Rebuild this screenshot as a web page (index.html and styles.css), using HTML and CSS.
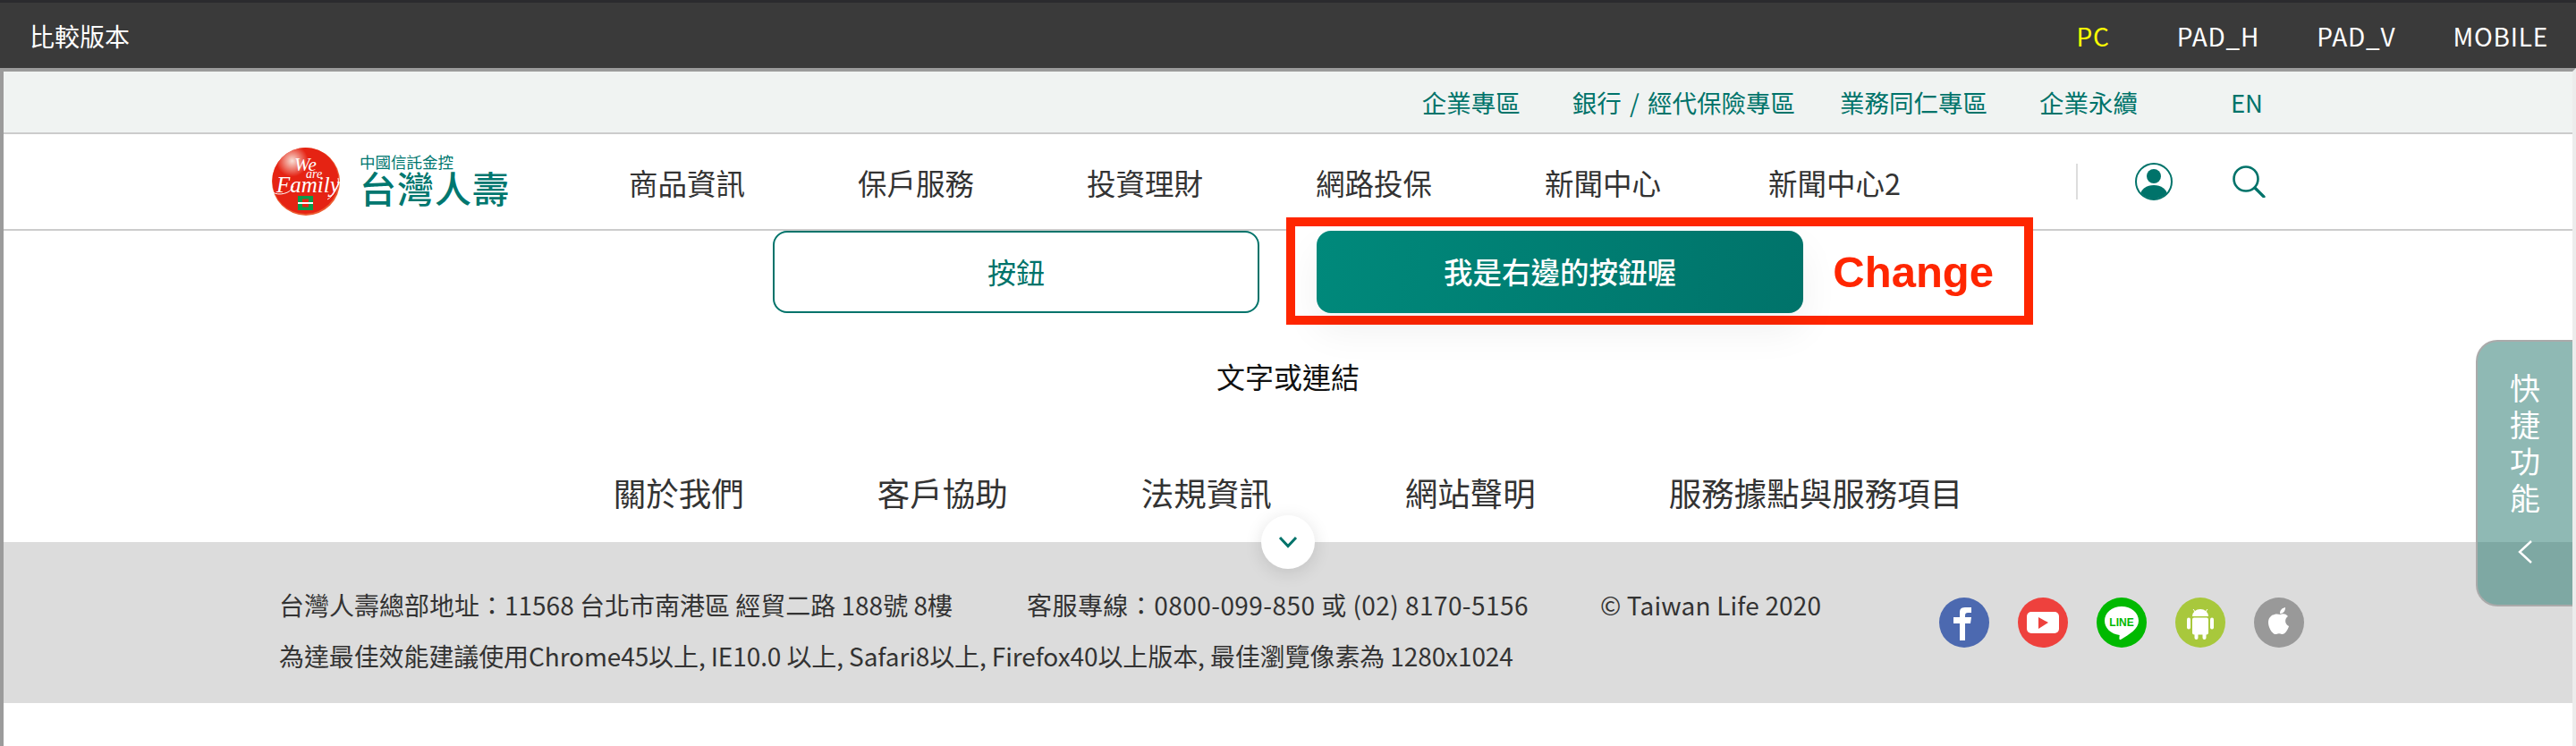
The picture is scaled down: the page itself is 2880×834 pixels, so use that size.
FILE: index.html
```html
<!DOCTYPE html>
<html lang="zh-Hant">
<head>
    <meta charset="UTF-8">
    <title>比較版本</title>
    <link rel="stylesheet" href="styles.css">
</head>
<body>
    <div class="compare-bar">
        <span class="compare-title">比較版本</span>
        <div class="compare-modes">
            <a class="active">PC</a>
            <a>PAD_H</a>
            <a>PAD_V</a>
            <a>MOBILE</a>
        </div>
    </div>
    <div class="frame">
        <div class="util-bar">
            <a>企業專區</a>
            <a class="gap-s">銀行 / 經代保險專區</a>
            <a>業務同仁專區</a>
            <a>企業永續</a>
            <a class="gap-l">EN</a>
        </div>
        <header class="site-header">
            <a class="logo">
                <svg class="logo-mark" viewBox="0 0 76 76">
                    <defs>
                        <radialGradient id="shine" cx="0.3" cy="0.2" r="0.24">
                            <stop offset="0" stop-color="#f8e0d6"/>
                            <stop offset="1" stop-color="#e52313"/>
                        </radialGradient>
                    </defs>
                    <circle cx="38" cy="38" r="38" fill="#ec5a30"/>
                    <circle cx="37.500" cy="37" r="37" fill="url(#shine)"/>
                    <text class="logo-script"><tspan x="25" y="26" font-size="21">We</tspan><tspan x="38" y="34" font-size="14">are</tspan><tspan x="5" y="50" font-size="25">Family</tspan></text>
                    <path d="M1 50c6 4 20 2 23-7M74 34c2 8-5 20-12 24" fill="none" stroke="#fff" stroke-width="1"/>
                    <rect x="29" y="54" width="17" height="16" fill="#0a9a4a"/>
                    <rect x="34" y="57.500" width="7" height="9" fill="#e52313"/>
                    <rect x="29" y="61" width="17" height="2" fill="#fff"/>
                </svg>
                <span class="logo-text">
                    <span class="logo-small">中國信託金控</span>
                    <span class="logo-big">台灣人壽</span>
                </span>
            </a>
            <nav class="main-nav">
                <a>商品資訊</a>
                <a>保戶服務</a>
                <a>投資理財</a>
                <a>網路投保</a>
                <a>新聞中心</a>
                <a class="nav-last">新聞中心2</a>
            </nav>
            <div class="header-icons">
                <svg class="icon-user" viewBox="0 0 42 42">
                    <defs>
                        <clipPath id="userClip"><circle cx="21" cy="21" r="19.500"/></clipPath>
                    </defs>
                    <circle cx="21" cy="21" r="20" fill="none" stroke="#00736a" stroke-width="2"/>
                    <circle cx="21" cy="15" r="8" fill="#00736a"/>
                    <ellipse cx="21" cy="36" rx="15" ry="11" fill="#00736a" clip-path="url(#userClip)"/>
                </svg>
                <svg class="icon-search" viewBox="0 0 37 36">
                    <circle cx="15" cy="15" r="13.500" fill="none" stroke="#00736a" stroke-width="2.600"/>
                    <path d="M25 25l10 10" fill="none" stroke="#00736a" stroke-width="3.200" stroke-linecap="round"/>
                </svg>
            </div>
        </header>
        <main class="content">
            <div class="btn-row">
                <a class="btn btn-outline">按鈕</a>
                <a class="btn btn-solid">我是右邊的按鈕喔</a>
                <div class="change-box">Change</div>
            </div>
            <a class="text-link">文字或連結</a>
            <nav class="footer-nav">
                <a>關於我們</a>
                <a>客戶協助</a>
                <a>法規資訊</a>
                <a>網站聲明</a>
                <a>服務據點與服務項目</a>
            </nav>
        </main>
        <footer class="site-footer">
            <a class="footer-toggle">
                <svg viewBox="0 0 22 14" width="22" height="14">
                    <path d="M2 2l9 9.500L20 2" fill="none" stroke="#00736a" stroke-width="3"/>
                </svg>
            </a>
            <div class="footer-info">
                <div class="footer-line">
                    <span class="addr">台灣人壽總部地址：11568 台北市南港區 經貿二路 188號 8樓</span>
                    <span class="phone">客服專線：0800-099-850 或 (02) 8170-5156</span>
                    <span class="copy">© Taiwan Life 2020</span>
                </div>
                <div class="footer-line footer-note">為達最佳效能建議使用Chrome45以上, IE10.0 以上, Safari8以上, Firefox40以上版本, 最佳瀏覽像素為 1280x1024</div>
            </div>
            <div class="social">
                <svg viewBox="0 0 56 56">
                    <circle cx="28" cy="28" r="28" fill="#4c69b0"/>
                    <path d="M23 48V29h-7v-7h7v-5c0-7 4-6 13-6v6h-4c-2 0-3 1-3 3v2h7l-1 7h-6v19z" fill="#fff"/>
                </svg>
                <svg viewBox="0 0 56 56">
                    <circle cx="28" cy="28" r="28" fill="#ee413d"/>
                    <rect x="10" y="16" width="36" height="24" rx="5" fill="#fff"/>
                    <path d="M23 22l11 6-11 7z" fill="#ee413d"/>
                </svg>
                <svg viewBox="0 0 56 56">
                    <circle cx="28" cy="28" r="28" fill="#00b900"/>
                    <path d="M28 10c11 0 19 7 19 16 0 9-10 15-20 21-1 .5-2 0-1.500-3l.2-2C16 41 9 34 9 26c0-9 8-16 19-16z" fill="#fff"/>
                    <text class="line-word" x="28" y="32" text-anchor="middle">LINE</text>
                </svg>
                <svg viewBox="0 0 56 56">
                    <circle cx="28" cy="28" r="28" fill="#a8c83c"/>
                    <path d="M19 21a9 8 0 0 1 18 0z" fill="#fff"/>
                    <path d="M20 13l3 4M36 13l-3 4" stroke="#fff" stroke-width="1"/>
                    <rect x="19" y="22.500" width="18" height="19" rx="2" fill="#fff"/>
                    <rect x="13" y="22.500" width="4" height="13" rx="2" fill="#fff"/>
                    <rect x="39" y="22.500" width="4" height="13" rx="2" fill="#fff"/>
                    <rect x="21.500" y="38" width="4" height="9" rx="2" fill="#fff"/>
                    <rect x="30.500" y="38" width="4" height="9" rx="2" fill="#fff"/>
                </svg>
                <svg viewBox="0 0 56 56">
                    <circle cx="28" cy="28" r="28" fill="#999"/>
                    <path d="M29 19c3-1 6-1.500 9 2-4 2.500-4 9 1 11-1 4-5 10-8 9-2-1-4-1-6 0-4 1-9-7-9-13 0-8 8-11 13-9zM29 18c0-4 2-6 6-7 0 4-2 7-6 7z" fill="#fff"/>
                </svg>
            </div>
        </footer>
    </div>
    <aside class="quick-panel">
        <span class="quick-label">快捷功能</span>
        <svg class="quick-arrow" viewBox="0 0 18 28" width="18" height="28">
            <path d="M16 2L3 14l13 12" fill="none" stroke="#fff" stroke-width="2.400"/>
        </svg>
    </aside>
</body>
</html>
```

FILE: styles.css
```css
body {
    margin: 0;
    background-color: #fff;
    color: #333;
    font-family: "Noto Sans CJK TC", "Noto Sans", sans-serif;
    height: 834px;
    overflow: hidden;
}
a {
    color: inherit;
    text-decoration: none;
}

/* compare bar */
.compare-bar {
    height: 73px;
    border-top: 3px solid #2b2b2e;
    background-color: #3a3a3a;
    color: #fff;
    font-size: 28px;
    display: flex;
    justify-content: space-between;
    align-items: center;
    padding: 0 31px 0 33px;
}
.compare-modes {
    display: flex;
    gap: 64px;
}
.compare-modes a {
    letter-spacing: 0.8px;
}
.compare-modes .active {
    color: #ff0;
    margin-right: 11px;
}

/* frame */
.frame {
    height: 754px;
    border-top: 4px solid #9b9b9b;
    border-left: 4px solid #9b9b9b;
    border-right: 4px solid #ececec;
}
.util-bar {
    height: 68px;
    background-color: #f0f3f2;
    border-bottom: 2px solid #ccc;
    color: #00736a;
    font-size: 27.500px;
    display: flex;
    justify-content: flex-end;
    align-items: center;
    gap: 58px;
    padding-right: 346px;
}
.util-bar .gap-s {
    margin-right: -8px;
    word-spacing: 3px;
}
.util-bar .gap-l {
    margin-left: 46px;
}
.site-header {
    height: 106px;
    border-bottom: 2px solid #ccc;
    display: flex;
    align-items: center;
    padding-left: 300px;
}
.logo {
    display: flex;
    align-items: center;
    gap: 22px;
    width: 399px;
}
.logo-mark {
    width: 76px;
    height: 76px;
}
.logo-script {
    fill: #fff;
    font-family: "Liberation Serif", serif;
    font-style: italic;
}
.logo-text {
    display: flex;
    flex-direction: column;
    color: #00776f;
    line-height: 1;
    margin-bottom: 4px;
}
.logo-small {
    font-size: 17.500px;
}
.logo-big {
    font-size: 41px;
    font-weight: 500;
    letter-spacing: 1px;
}
.main-nav {
    display: flex;
    gap: 126px;
    font-size: 32.500px;
}
.main-nav .nav-last {
    margin-left: -6px;
}
.header-icons {
    display: flex;
    align-items: center;
    border-left: 2px solid #ddd;
    height: 40px;
    margin-left: 196px;
    padding-left: 64px;
    gap: 67px;
}
.icon-user {
    width: 42px;
    height: 42px;
}
.icon-search {
    width: 37px;
    height: 36px;
}

/* content */
.content {
    display: flex;
    flex-direction: column;
    align-items: center;
}
.btn-row {
    position: relative;
    display: flex;
    gap: 64px;
}
.btn {
    box-sizing: border-box;
    width: 544px;
    height: 92px;
    padding-bottom: 3px;
    border-radius: 16px;
    font-size: 32px;
    display: flex;
    align-items: center;
    justify-content: center;
}
.btn-outline {
    border: 2px solid #00736a;
    color: #00736a;
}
.btn-solid {
    position: relative;
    z-index: 2;
    background: linear-gradient(100deg, #00897b, #00736a);
    color: #fff;
    font-size: 32.500px;
    font-weight: 500;
    box-shadow: 0 20px 44px rgba(0, 0, 0, 0.06);
}
.change-box {
    position: absolute;
    z-index: 1;
    box-sizing: border-box;
    top: -15px;
    left: 574px;
    width: 835px;
    height: 120px;
    border: 10px solid #ff2600;
    background-color: #fff;
    color: #ff2600;
    font-family: "Liberation Sans", Arial, sans-serif;
    font-size: 49px;
    font-weight: bold;
    text-align: right;
    line-height: 103px;
    padding-right: 34px;
}
.text-link {
    margin-top: 47px;
    font-size: 32px;
    line-height: 46px;
    color: #111;
}
.footer-nav {
    display: flex;
    gap: 149px;
    margin-top: 82px;
    font-size: 36.500px;
    line-height: 52px;
    height: 81px;
}

/* footer */
.site-footer {
    position: relative;
    box-sizing: border-box;
    height: 180px;
    background-color: #dcdcdc;
    display: flex;
    padding: 50px 0 0 308px;
    font-size: 28px;
    color: #333;
}
.footer-toggle {
    position: absolute;
    top: -30px;
    left: 1406px;
    width: 60px;
    height: 60px;
    border-radius: 50%;
    background-color: #fff;
    box-shadow: 0 4px 20px rgba(0, 0, 0, 0.12);
    display: flex;
    align-items: center;
    justify-content: center;
}
.footer-info {
    width: 1856px;
}
.footer-line {
    display: flex;
    height: 57px;
    line-height: 40px;
}
.footer-note {
    letter-spacing: -0.1px;
}
.addr {
    width: 836px;
}
.phone {
    width: 641px;
    letter-spacing: 0.45px;
}
.copy {
    letter-spacing: 0.15px;
}
.social {
    display: flex;
    gap: 32px;
    margin-top: 12px;
    align-items: flex-start;
}
.social svg {
    width: 56px;
    height: 56px;
}
.line-word {
    fill: #00b900;
    font-family: "Liberation Sans", sans-serif;
    font-size: 12px;
    font-weight: bold;
}

/* quick panel lies over the page */
.quick-panel {
    position: absolute;
    top: 380px;
    right: 4px;
    box-sizing: border-box;
    width: 108px;
    height: 298px;
    border: 2px solid #aaa;
    border-right: 0;
    border-radius: 24px 0 0 24px;
    background-color: rgba(31, 115, 105, 0.5);
    color: #fff;
    display: flex;
    flex-direction: column;
    align-items: center;
    padding-top: 30px;
}
.quick-label {
    width: 34px;
    font-size: 34px;
    line-height: 41px;
    text-align: center;
}
.quick-arrow {
    margin-top: 27px;
}
```
